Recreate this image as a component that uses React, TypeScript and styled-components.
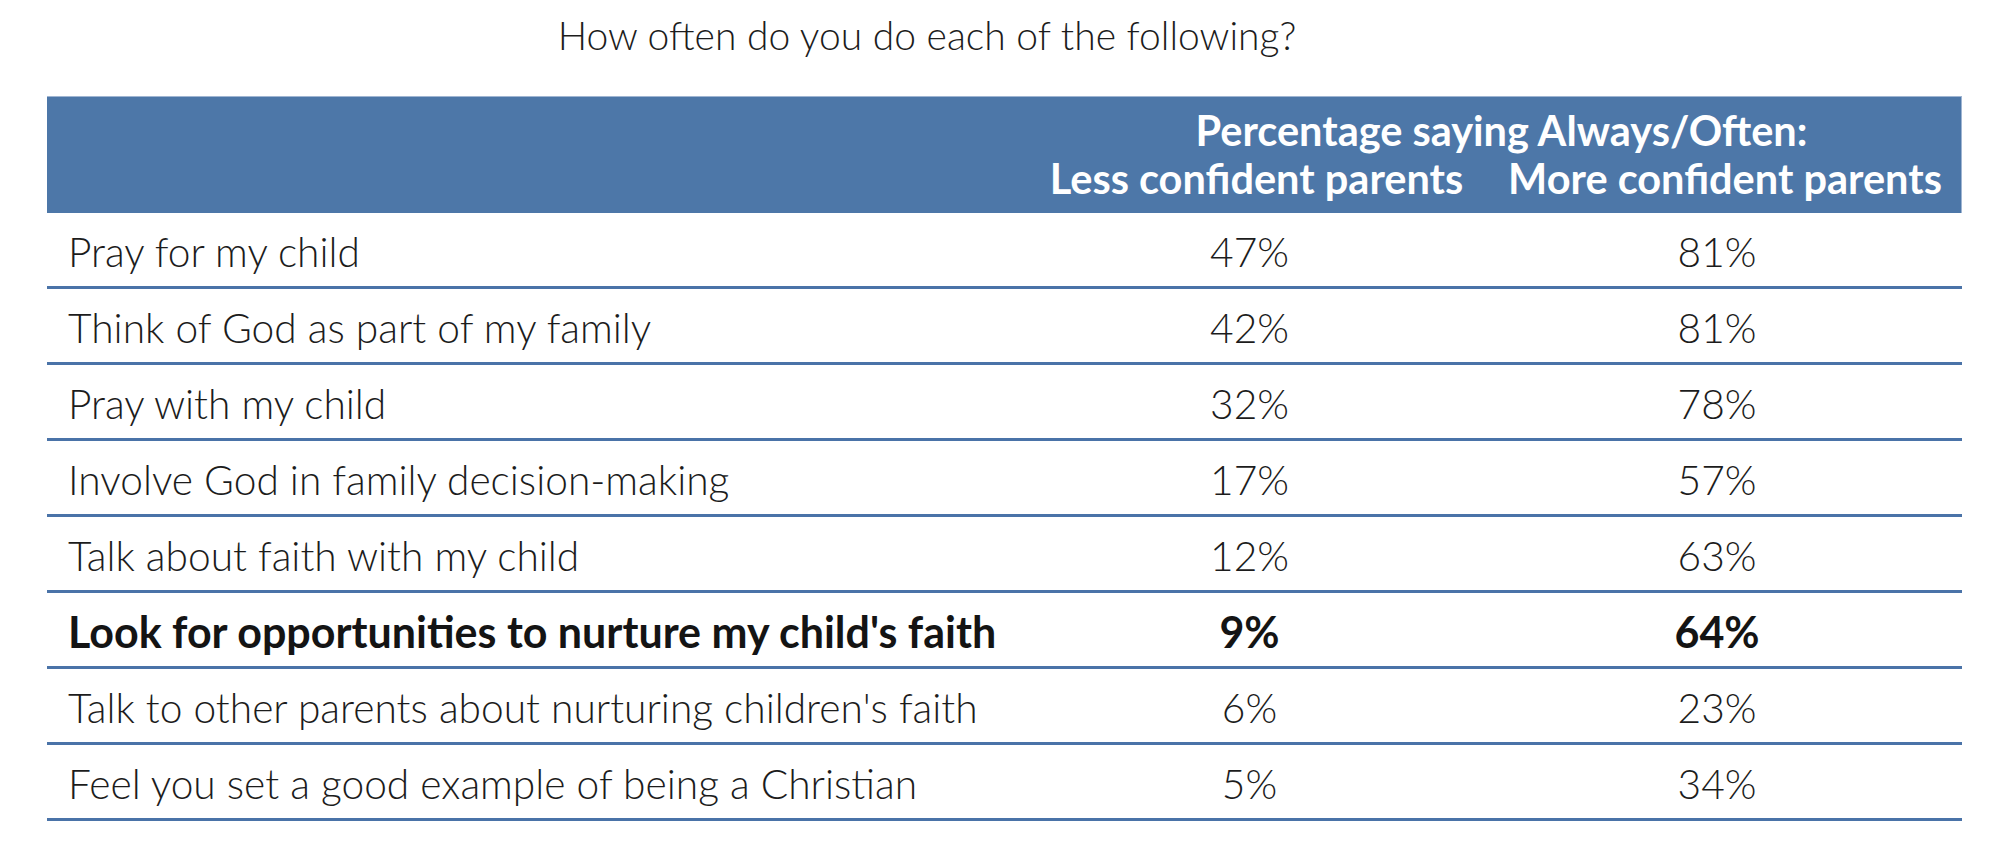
import styled, { createGlobalStyle } from 'styled-components';

const rows = [
    { label: 'Pray for my child', less: '47%', more: '81%' },
    { label: 'Think of God as part of my family', less: '42%', more: '81%' },
    { label: 'Pray with my child', less: '32%', more: '78%' },
    { label: 'Involve God in family decision-making', less: '17%', more: '57%' },
    { label: 'Talk about faith with my child', less: '12%', more: '63%' },
    {
        label: "Look for opportunities to nurture my child's faith",
        less: '9%',
        more: '64%',
        bold: true,
    },
    {
        label: "Talk to other parents about nurturing children's faith",
        less: '6%',
        more: '23%',
    },
    {
        label: 'Feel you set a good example of being a Christian',
        less: '5%',
        more: '34%',
    },
];

export default function App() {
    return (
        <>
            <GlobalStyle />
            <Page>
                <Title>How often do you do each of the following?</Title>

                <Table>
                    <HeaderRow>
                        <HeaderSpan>Percentage saying Always/Often:</HeaderSpan>
                        <HeaderCell>Less confident parents</HeaderCell>
                        <HeaderCell>More confident parents</HeaderCell>
                    </HeaderRow>

                    {rows.map((row) => (
                        <Row key={row.label} $bold={row.bold}>
                            <Label>{row.label}</Label>
                            <Value>{row.less}</Value>
                            <Value>{row.more}</Value>
                        </Row>
                    ))}
                </Table>
            </Page>
        </>
    );
}

const GlobalStyle = createGlobalStyle`
    html, body {
        margin: 0;
        padding: 0;
        background: #ffffff;
    }

    body {
        font-family: Lato, "Open Sans", sans-serif;
        color: #1c1c1c;
    }
`;

const Page = styled.main`
    width: 2000px;
    padding-top: 7px;
`;

const Title = styled.h1`
    margin: 0;
    padding-right: 146px;
    text-align: center;
    font-size: 39px;
    font-weight: 300;
    line-height: 56px;
    color: #1c1c1c;
`;

const Table = styled.div`
    margin: 33px 0 0 47px;
    width: 1915px;
`;

const grid = `
    display: grid;
    grid-template-columns: 980px 445px 490px;
`;

const HeaderRow = styled.div`
    ${grid}
    height: 117px;
    box-sizing: border-box;
    padding-top: 9px;
    background: #4d77a8;
    border-top: 1px solid #9fb5d2;
    border-right: 1px solid #9fb5d2;
    color: #ffffff;
    font-size: 41.5px;
    font-weight: 700;
    line-height: 48px;
    align-content: start;
`;

const HeaderSpan = styled.div`
    grid-column: 2 / 4;
    text-align: center;
    padding-left: 14px;
`;

const HeaderCell = styled.div`
    text-align: center;
    white-space: nowrap;

    &:nth-child(2) {
        grid-column: 2;
        padding-left: 14px;
    }

    &:nth-child(3) {
        padding-left: 16px;
    }
`;

const Row = styled.div<{ $bold?: boolean }>`
    ${grid}
    height: 76px;
    box-sizing: border-box;
    padding-top: 3px;
    align-items: center;
    border-bottom: 3px solid #4a73a8;
    font-size: ${(p) => (p.$bold ? '43px' : '40.7px')};
    font-weight: ${(p) => (p.$bold ? 700 : 300)};
    color: ${(p) => (p.$bold ? '#141414' : '#1c1c1c')};

    &:first-of-type {
        height: 79px;
    }
`;

const Label = styled.div`
    padding-left: 21px;
    white-space: nowrap;
`;

const Value = styled.div`
    text-align: center;
`;
